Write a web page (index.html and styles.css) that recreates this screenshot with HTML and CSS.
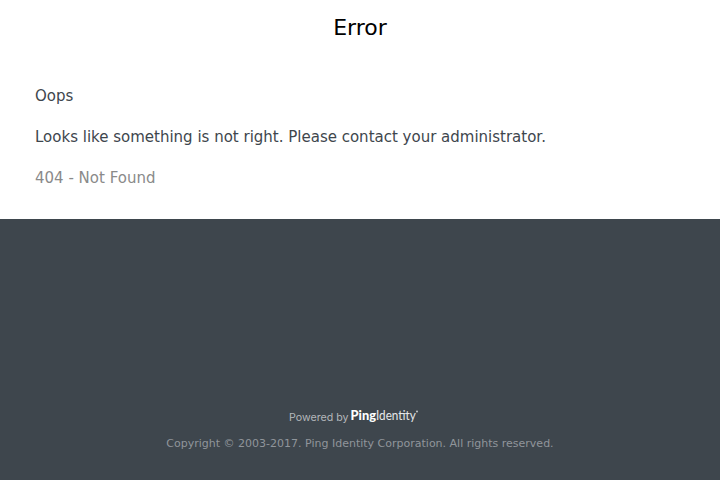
FILE: index.html
```html
<!DOCTYPE html>
<html lang="en">
<head>
<meta charset="utf-8">
<title>Error</title>
<link rel="stylesheet" href="styles.css">
</head>
<body>
<main class="card">
  <h1 class="title">Error</h1>
  <div class="messages">
    <p>Oops</p>
    <p>Looks like something is not right. Please contact your administrator.</p>
    <p class="code">404 - Not Found</p>
  </div>
</main>
<footer class="footer">
  <svg class="brand" width="144" height="24" viewBox="0 0 144 24">
    <text class="powered" x="1" y="17" textLength="59.5" lengthAdjust="spacingAndGlyphs">Powered by</text>
    <text class="ping" x="62.6" y="16.4" textLength="25.4" lengthAdjust="spacingAndGlyphs">Ping</text>
    <text class="identity" x="88" y="16.4" textLength="39.8" lengthAdjust="spacingAndGlyphs">Identity</text>
    <path class="bar" d="M112 9.6h9"/>
    <circle class="mark" cx="129" cy="7.5" r="0.9"/>
  </svg>
  <p class="copyright">Copyright © 2003-2017. Ping Identity Corporation. All rights reserved.</p>
</footer>
</body>
</html>
```
FILE: styles.css
```css
* { box-sizing: border-box; }
body {
  margin: 0;
  height: 480px;
  display: flex;
  flex-direction: column;
  overflow: hidden;
  background: #3e464d;
  color: #3e464d;
  font: 15px/21px "DejaVu Sans", sans-serif;
}
.card { height: 219px; padding: 14px 35px 0; background: #fff; }
.title { margin: 0; color: #000; font-size: 22px; font-weight: 400; line-height: 28px; text-align: center; }
.messages { display: flex; flex-direction: column; gap: 20px; padding-top: 44px; }
.messages p { margin: 0; }
.messages .code { color: #8a8a8a; }
.footer { margin-top: auto; padding-bottom: 28px; text-align: center; }
.brand { display: block; margin: 0 auto 8px; }
.powered { fill: #b4b8bb; font: 10.5px Inter, sans-serif; }
.ping { fill: #fff; font: 900 13.5px Lato, sans-serif; }
.identity { fill: #e6e8e9; font: 13.5px Lato, sans-serif; }
.bar { fill: none; stroke: #e6e8e9; stroke-width: 0.8; }
.mark { fill: #d0d3d5; }
.copyright { margin: 0; color: #90959b; font-size: 11px; line-height: 16px; }
```
